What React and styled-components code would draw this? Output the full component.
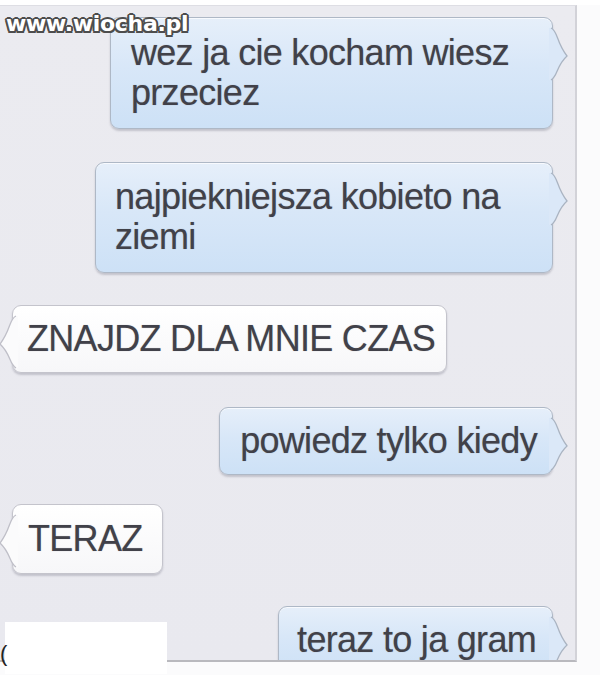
import React from "react";
import styled, { createGlobalStyle } from "styled-components";

const Global = createGlobalStyle`
  html, body { margin: 0; padding: 0; background: #ffffff; }
  body { width: 600px; height: 675px; overflow: hidden; position: relative; }
`;

const Screen = styled.div`
  position: relative;
  width: 600px;
  height: 675px;
  background: #fbfbfc;
`;

const Panel = styled.div`
  margin-top: 5px;
  width: 577px;
  height: 657px;
  box-sizing: border-box;
  background: linear-gradient(180deg, #ebebf0 0%, #e9e9ef 100%);
  border-top: 1px solid #dedee4;
  border-right: 2px solid #d2d2d8;
  border-bottom: 2px solid #b9b9be;
  overflow: hidden;
  display: flex;
  flex-direction: column;
  padding: 11px 22px 0 12px;
`;

const Row = styled.div`
  display: flex;
  justify-content: ${(p) => (p.$out ? "flex-end" : "flex-start")};
  margin-top: ${(p) => p.$gap || 0}px;
`;

const Bubble = styled.div`
  position: relative;
  box-sizing: border-box;
  width: ${(p) => (p.$width ? `${p.$width}px` : "auto")};
  padding: ${(p) => p.$pad || "14px 20px 14px 20px"};
  border-radius: 9px;
  border: 1px solid ${(p) => (p.$out ? "#aeb8c6" : "#c4c4cc")};
  background: ${(p) =>
    p.$out
      ? "linear-gradient(180deg, #e6effa 0%, #d8e7f8 45%, #cde1f6 100%)"
      : "linear-gradient(180deg, #ffffff 0%, #f7f7f9 100%)"};
  box-shadow: 0 2px 2px rgba(80, 80, 100, 0.25), inset 0 1px 0 rgba(255,255,255,0.7);
  font-family: "Liberation Sans", Arial, sans-serif;
  font-size: 36px;
  line-height: 40px;
  letter-spacing: -0.7px;
  color: #414149;
  text-shadow: 0 0 1px rgba(60, 60, 70, 0.4);
  white-space: pre-line;
`;

const Tail = styled.svg`
  position: absolute;
  top: 10px;
  ${(p) => (p.$out ? "right: -17px;" : "left: -13px;")}
  width: 18px;
  height: 52px;
  overflow: visible;
`;

const Watermark = styled.div`
  position: absolute;
  left: 6px;
  top: 6px;
  font-family: "DejaVu Sans", Verdana, sans-serif;
  font-weight: bold;
  font-size: 22px;
  letter-spacing: -0.3px;
  color: #ffffff;
  text-shadow:
    -1.5px -1.5px 0 #4d4d4d, 1.5px -1.5px 0 #4d4d4d,
    -1.5px 1.5px 0 #4d4d4d, 1.5px 1.5px 0 #4d4d4d,
    0 -2px 0 #4d4d4d, 0 2px 0 #4d4d4d,
    -2px 0 0 #4d4d4d, 2px 0 0 #4d4d4d;
`;

const Patch = styled.div`
  position: absolute;
  left: 5px;
  top: 617px;
  width: 162px;
  height: 52px;
  background: #ffffff;
`;

const Paren = styled.div`
  position: absolute;
  left: 0;
  top: 636px;
  font-family: "Liberation Sans", Arial, sans-serif;
  font-size: 22px;
  color: #222;
`;

function TailShape({ out }) {
  const fill = out ? "#dbe8f8" : "#fbfbfc";
  const stroke = out ? "#aab4c2" : "#bfbfc8";
  const d = out
    ? "M0 0 C 7 3, 5 14, 16 28 C 5 38, 7 48, 0 52"
    : "M16 0 C 9 3, 11 14, 0 28 C 11 38, 9 48, 16 52";
  const cover = out
    ? "M-2 0 L0 0 C 7 3, 5 14, 16 28 C 5 38, 7 48, 0 52 L-2 52 Z"
    : "M18 0 L16 0 C 9 3, 11 14, 0 28 C 11 38, 9 48, 16 52 L18 52 Z";
  return (
    <Tail $out={out} viewBox="0 0 18 52">
      <path d={cover} fill={fill} stroke="none" />
      <path d={d} fill="none" stroke={stroke} strokeWidth="1.3" />
    </Tail>
  );
}

const messages = [
  { out: true, text: "wez ja cie kocham wiesz\nprzeciez", width: 443, gap: 0, pad: "15px 20px 15px 20px" },
  { out: true, text: "najpiekniejsza kobieto na\nziemi", width: 458, gap: 33, pad: "14px 20px 15px 19px" },
  { out: false, text: "ZNAJDZ DLA MNIE CZAS", gap: 32, pad: "13px 11px 13px 14px" },
  { out: true, text: "powiedz tylko kiedy", gap: 34, pad: "13px 15px 13px 20px" },
  { out: false, text: "TERAZ", gap: 29, pad: "14px 19px 14px 15px" },
  { out: true, text: "teraz to ja gram", gap: 32, pad: "13px 16px 13px 18px" },
];

export default function App() {
  return (
    <>
      <Global />
      <Screen>
        <Panel>
          {messages.map((m, i) => (
            <Row key={i} $out={m.out} $gap={m.gap}>
              <Bubble $out={m.out} $width={m.width} $pad={m.pad}>
                {m.text}
                <TailShape out={m.out} />
              </Bubble>
            </Row>
          ))}
        </Panel>
        <Watermark>www.wiocha.pl</Watermark>
        <Patch />
        <Paren>(</Paren>
      </Screen>
    </>
  );
}
